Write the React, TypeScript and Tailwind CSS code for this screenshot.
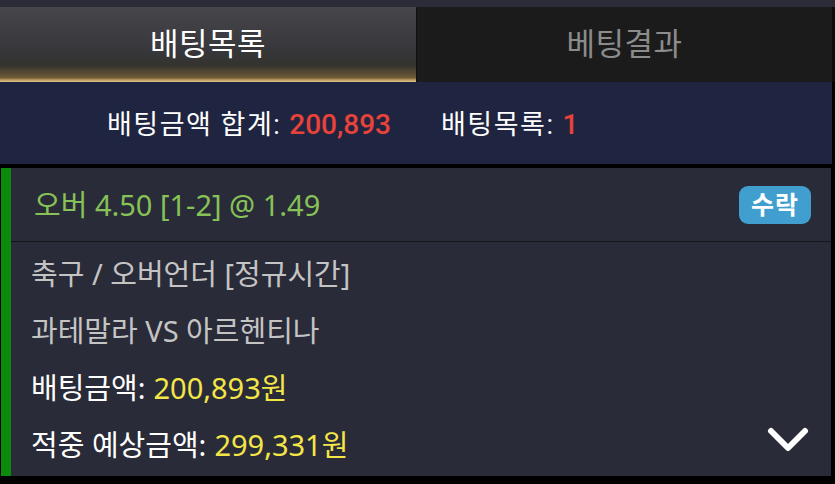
import React from "react";

const KR = { fontFamily: '"Noto Sans", "Noto Sans CJK KR", sans-serif' };
const RB = { fontFamily: 'Roboto, "Noto Sans CJK KR", sans-serif' };

export default function App() {
  return (
    <div className="w-[835px] h-[484px] bg-black flex flex-col overflow-hidden" style={KR}>
      <div className="h-[7px] bg-[#2b2c38]" />
      <div className="h-[75px] flex">
        <div className="w-[416px] flex items-center justify-center bg-[linear-gradient(to_bottom,#46464b_0%,#37373c_55%,#34332f_78%,#6e5a35_94%,#c9a86b_98%,#e0c48a_100%)]">
          <span className="text-[31px] text-white leading-none -mt-[2px] tracking-[0.5px]">배팅목록</span>
        </div>
        <div className="flex-1 flex items-center justify-center bg-[#1b1b1c] border-l border-[#101010] border-r-[3px] border-r-[#0c0c0c]">
          <span className="text-[31px] text-[#8c8c8c] leading-none -mt-[2px] tracking-[0.5px]">베팅결과</span>
        </div>
      </div>
      <div className="h-[82px] bg-[#1f2540] mr-[3px] flex items-center pl-[107px] pt-[4px]">
        <span className="text-[27px] text-white leading-none tracking-[1.5px]" style={RB}>배팅금액 합계:</span>
        <span className="text-[28px] text-[#e8423a] font-medium leading-none ml-[8px]" style={RB}>200,893</span>
        <span className="text-[27px] text-white leading-none ml-[50px] tracking-[1.5px]" style={RB}>배팅목록:</span>
        <span className="text-[28px] text-[#e8423a] font-medium leading-none ml-[8px]" style={RB}>1</span>
      </div>
      <div className="h-[4px]" />
      <div className="h-[308px] flex mr-[4px]">
        <div className="w-[10px] ml-[1px] bg-[#0b8a0b]" />
        <div className="flex-1 bg-[#2a2b38] flex flex-col">
          <div className="h-[74px] flex items-center justify-between pl-[23px] pr-[20px] border-b border-[#15161c]">
            <span className="text-[29px] text-[#86c257] leading-none">오버 4.50 [1-2] @ 1.49</span>
            <span className="w-[72px] h-[38px] rounded-[9px] bg-[#419fcf] flex items-center justify-center text-[25px] font-bold text-white leading-none tracking-[1px]">수락</span>
          </div>
          <div className="flex-1 relative pl-[20px] pt-[3px] flex flex-col">
            <div className="h-[57px] flex items-center text-[29px] text-[#c4c4c4] leading-none">축구 / 오버언더 [정규시간]</div>
            <div className="h-[57px] flex items-center text-[29px] text-[#c4c4c4] leading-none">과테말라 VS 아르헨티나</div>
            <div className="h-[57px] flex items-center text-[29px] text-white leading-none">
              배팅금액: <span className="text-[#f3e646] ml-[8px]">200,893원</span>
            </div>
            <div className="h-[57px] flex items-center text-[29px] text-white leading-none">
              적중 예상금액: <span className="text-[#f3e646] ml-[8px]">299,331원</span>
            </div>
            <svg className="absolute right-[22px] bottom-[22px]" width="42" height="28" viewBox="0 0 42 28">
              <path d="M4 5 L21 22 L38 5" fill="none" stroke="white" strokeWidth="6" strokeLinecap="round" strokeLinejoin="round" />
            </svg>
          </div>
        </div>
      </div>
    </div>
  );
}
